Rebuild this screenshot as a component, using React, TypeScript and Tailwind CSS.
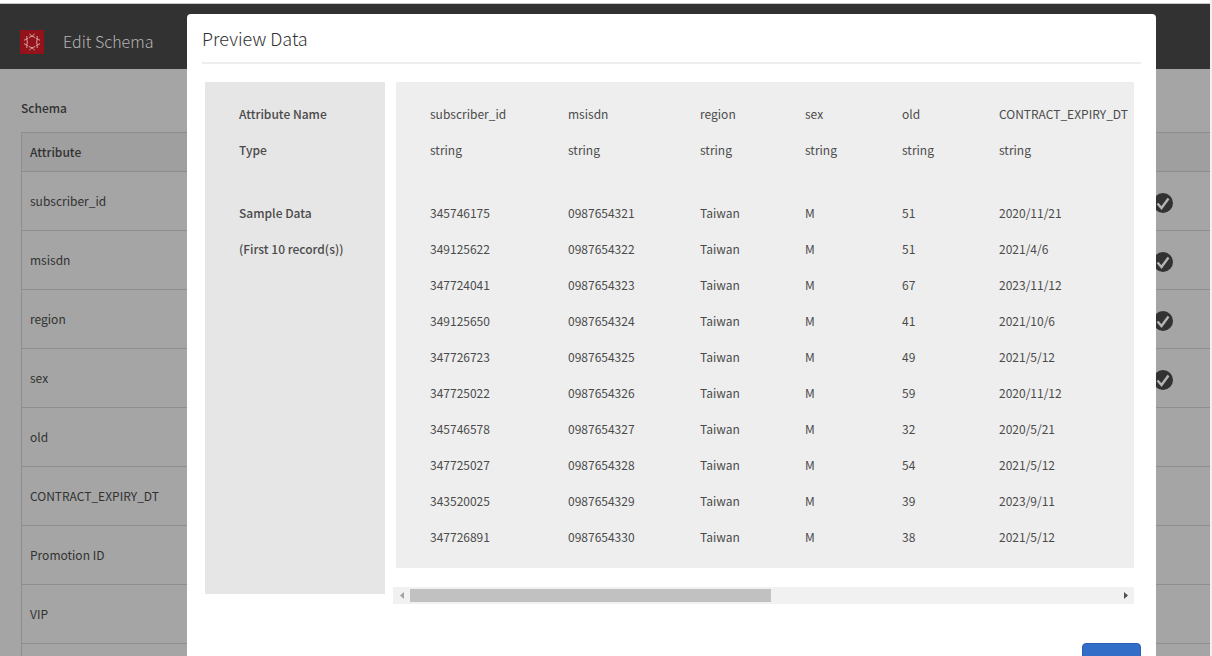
const attributes = [
  { name: 'subscriber_id', selected: true },
  { name: 'msisdn', selected: true },
  { name: 'region', selected: true },
  { name: 'sex', selected: true },
  { name: 'old', selected: false },
  { name: 'CONTRACT_EXPIRY_DT', selected: false },
  { name: 'Promotion ID', selected: false },
  { name: 'VIP', selected: false },
];

const columns = ['subscriber_id', 'msisdn', 'region', 'sex', 'old', 'CONTRACT_EXPIRY_DT'];

const records = [
  ['345746175', '0987654321', 'Taiwan', 'M', '51', '2020/11/21'],
  ['349125622', '0987654322', 'Taiwan', 'M', '51', '2021/4/6'],
  ['347724041', '0987654323', 'Taiwan', 'M', '67', '2023/11/12'],
  ['349125650', '0987654324', 'Taiwan', 'M', '41', '2021/10/6'],
  ['347726723', '0987654325', 'Taiwan', 'M', '49', '2021/5/12'],
  ['347725022', '0987654326', 'Taiwan', 'M', '59', '2020/11/12'],
  ['345746578', '0987654327', 'Taiwan', 'M', '32', '2020/5/21'],
  ['347725027', '0987654328', 'Taiwan', 'M', '54', '2021/5/12'],
  ['343520025', '0987654329', 'Taiwan', 'M', '39', '2023/9/11'],
  ['347726891', '0987654330', 'Taiwan', 'M', '38', '2021/5/12'],
];

function Logo() {
  return (
    <svg viewBox="0 0 24 24" className="size-6" aria-hidden="true">
      <rect width="24" height="24" fill="#94131a" />
      <g fill="none" stroke="#d9aeb0" strokeWidth="0.9" strokeLinejoin="round">
        <path d="M9.300 4 12 6.200 14.700 4M9 7.400 12 6.200l3 1.200" />
        <path d="M9.300 20 12 17.800l2.700 2.200M9 16.600l3 1.200 3-1.200" />
        <path d="M6.800 6v3.200L4 10.200M17.200 6v3.200l2.800 1" />
        <path d="M6.800 18v-3.200L4 13.800M17.200 18v-3.200l2.800-1" />
        <path d="M6.800 9.200 8.200 8M17.200 9.200 15.800 8M6.800 14.800 8.200 16M17.200 14.800 15.800 16" />
        <path d="M6.800 9.200 7.400 12l-.6 2.800M17.200 9.200l-.6 2.800.6 2.800" />
      </g>
    </svg>
  );
}

function CheckBadge() {
  return (
    <svg viewBox="0 0 20 20" className="size-5" role="img" aria-label="Selected">
      <circle cx="10" cy="10" r="10" fill="#323232" />
      <path d="M4.500 10.500 8.500 15 15.500 5.500" fill="none" stroke="#b4b4b4" strokeWidth="2.400" />
    </svg>
  );
}

function SchemaPage() {
  return (
    <div className="h-full overflow-hidden bg-[#a5a5a5]">
      <header className="flex h-[65px] items-center gap-[19px] bg-[#323232] pl-5 pt-[10px]">
        <Logo />
        <h1 className="pb-[2px] text-base leading-6 font-light text-[#b4b4b4]">Edit Schema</h1>
      </header>
      <main className="pl-[21px] pt-[29px]">
        <h2 className="text-xs leading-5 font-medium">Schema</h2>
        <table className="mt-[14px] w-full border-separate border-spacing-0 border-t border-l border-[#8e8e8e] text-left">
          <thead>
            <tr className="h-[39px] bg-[#9f9f9f]">
              <th className="border-b border-[#8e8e8e] pl-2 font-medium">Attribute</th>
              <th className="border-b border-[#8e8e8e]" />
            </tr>
          </thead>
          <tbody>
            {attributes.map((attribute) => (
              <tr key={attribute.name} className="h-[59px]">
                <td className="border-b border-[#8e8e8e] pl-2">{attribute.name}</td>
                <td className="border-b border-[#8e8e8e] pt-1 pr-[37px]">
                  <div className="flex justify-end">{attribute.selected && <CheckBadge />}</div>
                </td>
              </tr>
            ))}
            <tr className="h-[59px]">
              <td colSpan={2} />
            </tr>
          </tbody>
        </table>
      </main>
    </div>
  );
}

function LabelPanel() {
  return (
    <div className="h-[512px] w-[180px] shrink-0 bg-[#e6e6e6] pt-[14px] pl-[34px] font-medium">
      <p className="leading-9">Attribute Name</p>
      <p className="mb-[27px] leading-9">Type</p>
      <p className="leading-9">Sample Data</p>
      <p className="leading-9">(First 10 record(s))</p>
    </div>
  );
}

function DataPanel() {
  return (
    <div className="bg-[#eeeeee] pt-[14px] pb-[13px] pl-[34px]">
      <table className="w-full table-fixed text-left whitespace-nowrap">
        <colgroup>
          <col className="w-[138px]" />
          <col className="w-[132px]" />
          <col className="w-[105px]" />
          <col className="w-[97px]" />
          <col className="w-[97px]" />
          <col />
        </colgroup>
        <thead>
          <tr className="h-9">
            {columns.map((name) => (
              <th key={name} className="font-normal">{name}</th>
            ))}
          </tr>
          <tr className="h-[63px] align-top">
            {columns.map((name) => (
              <td key={name} className="leading-9">string</td>
            ))}
          </tr>
        </thead>
        <tbody>
          {records.map((record) => (
            <tr key={record[1]} className="h-9">
              {record.map((value, index) => (
                <td key={columns[index]}>{value}</td>
              ))}
            </tr>
          ))}
        </tbody>
      </table>
    </div>
  );
}

function ScrollTrack() {
  return (
    <div className="mt-[19px] -ml-[3px] flex h-[17px] items-center bg-[#f1f1f1]">
      <button type="button" aria-label="Scroll left" className="flex h-full w-[17px] items-center justify-center">
        <svg viewBox="0 0 4 7" className="h-[7px] w-1" aria-hidden="true">
          <path d="M4 0v7L0 3.500z" fill="#a3a3a3" />
        </svg>
      </button>
      <div className="h-[13px] flex-1">
        <div className="h-full w-[51%] bg-[#c1c1c1]" />
      </div>
      <button type="button" aria-label="Scroll right" className="flex h-full w-[17px] items-center justify-center">
        <svg viewBox="0 0 4 7" className="h-[7px] w-1" aria-hidden="true">
          <path d="M0 0v7l4-3.500z" fill="#505050" />
        </svg>
      </button>
    </div>
  );
}

function PreviewDialog() {
  return (
    <section
      role="dialog"
      aria-labelledby="preview-title"
      className="absolute top-[14px] right-[54px] left-[187px] rounded-t bg-white px-[15px] pb-5 text-[#4b4b4b]"
    >
      <h2
        id="preview-title"
        className="border-b-2 border-[#eeeeee] pt-[10px] pb-[10px] text-lg leading-7 font-light text-[#323232]"
      >
        Preview Data
      </h2>
      <div className="flex gap-[11px] pt-[18px] pr-[7px] pl-[3px]">
        <LabelPanel />
        <div className="min-w-0 flex-1">
          <DataPanel />
          <ScrollTrack />
        </div>
      </div>
      <footer className="flex justify-end pt-[39px]">
        <button
          type="button"
          className="h-9 rounded border border-[#2a5fb0] bg-[#326ec8] px-[13px] font-medium text-white"
        >
          Close
        </button>
      </footer>
    </section>
  );
}

export default function App() {
  return (
    <div className="relative h-screen overflow-hidden border-r-2 border-[#f0f0f0] bg-white font-['Noto_Sans_CJK_SC','Noto_Sans',sans-serif] text-xs text-[#323232]">
      <div className="flex h-full flex-col pt-[3px]">
        <div className="h-px shrink-0 bg-[#c8c8c8]" />
        <div className="min-h-0 flex-1">
          <SchemaPage />
        </div>
      </div>
      <PreviewDialog />
    </div>
  );
}
